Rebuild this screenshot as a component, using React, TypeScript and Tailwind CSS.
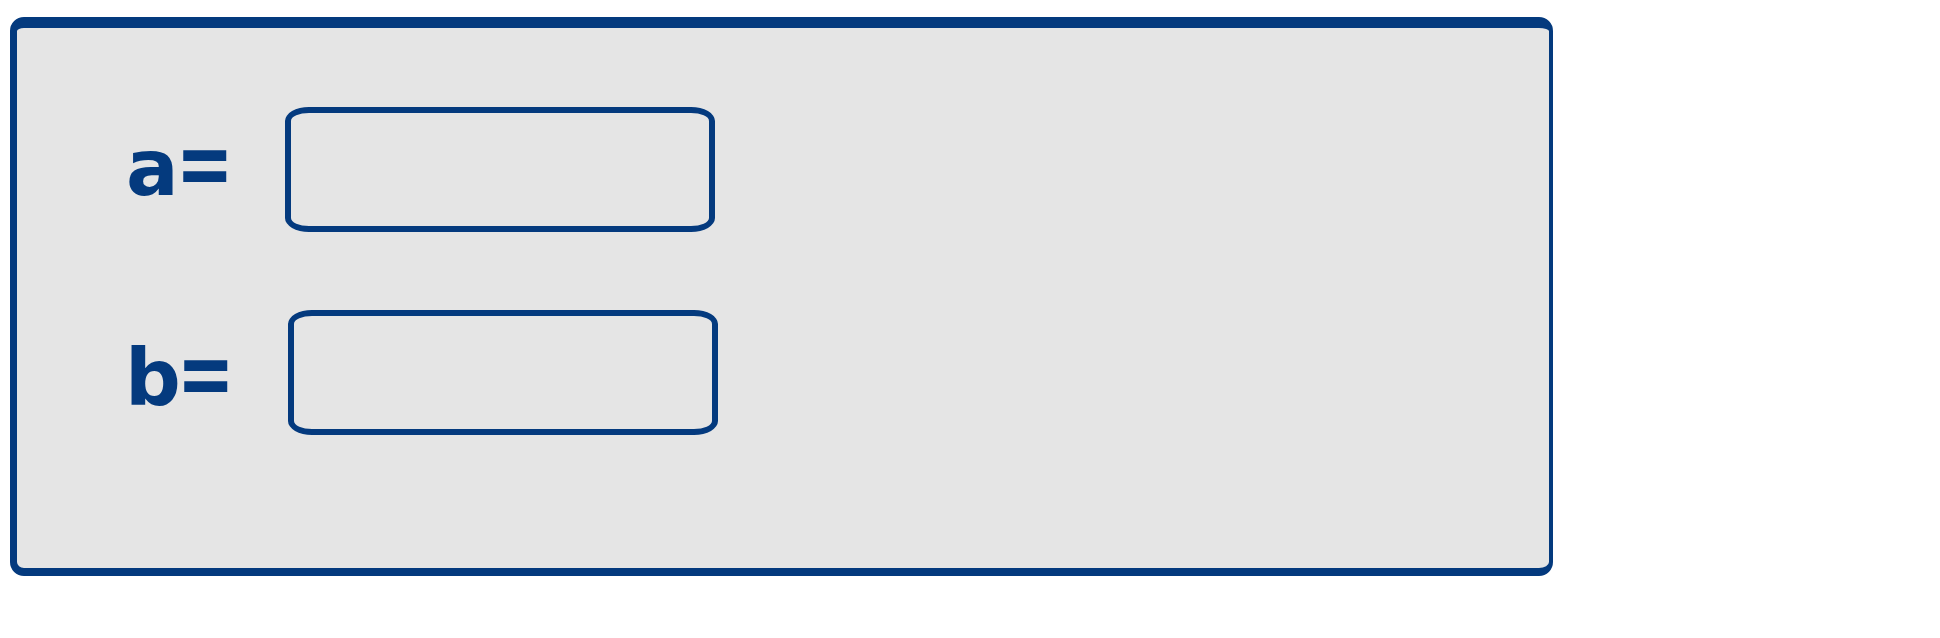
export default function App() {
  const rows = [
    { letter: "a", shift: "ml-0", text: "pl-[109px] pt-0", eq: "-ml-[3px]" },
    { letter: "b", shift: "ml-[3px]", text: "pl-[105px] pt-[14px]", eq: "-ml-[4px]" },
  ];
  return (
    <div className="w-[1940px] h-[638px] bg-white pt-[17px] pl-[10px]">
      <div className="w-[1543px] h-[559px] bg-[#e5e5e5] border-[#043a7e] border-t-[11px] border-b-[8px] border-l-[7px] border-r-[4px] rounded-[14px] pt-[79px]">
        <div className="flex flex-col gap-[78px]">
          {rows.map((r) => (
            <div key={r.letter} className={`flex items-center h-[125px] ${r.shift}`}>
              <span
                className={`w-[268px] pb-[4px] ${r.text} flex items-center text-[78px] font-bold leading-none text-[#043a7e]`}
                style={{ fontFamily: '"DejaVu Sans", sans-serif' }}
              >
                <span>{r.letter}</span>
                <span className={`inline-block ${r.eq} origin-[left_center] scale-x-[0.88] scale-y-[1.18] -translate-y-[5px]`}>=</span>
              </span>
              <div className="w-[430px] h-[125px] border-[6px] border-[#043a7e] rounded-[24px/14px]" />
            </div>
          ))}
        </div>
      </div>
    </div>
  );
}
